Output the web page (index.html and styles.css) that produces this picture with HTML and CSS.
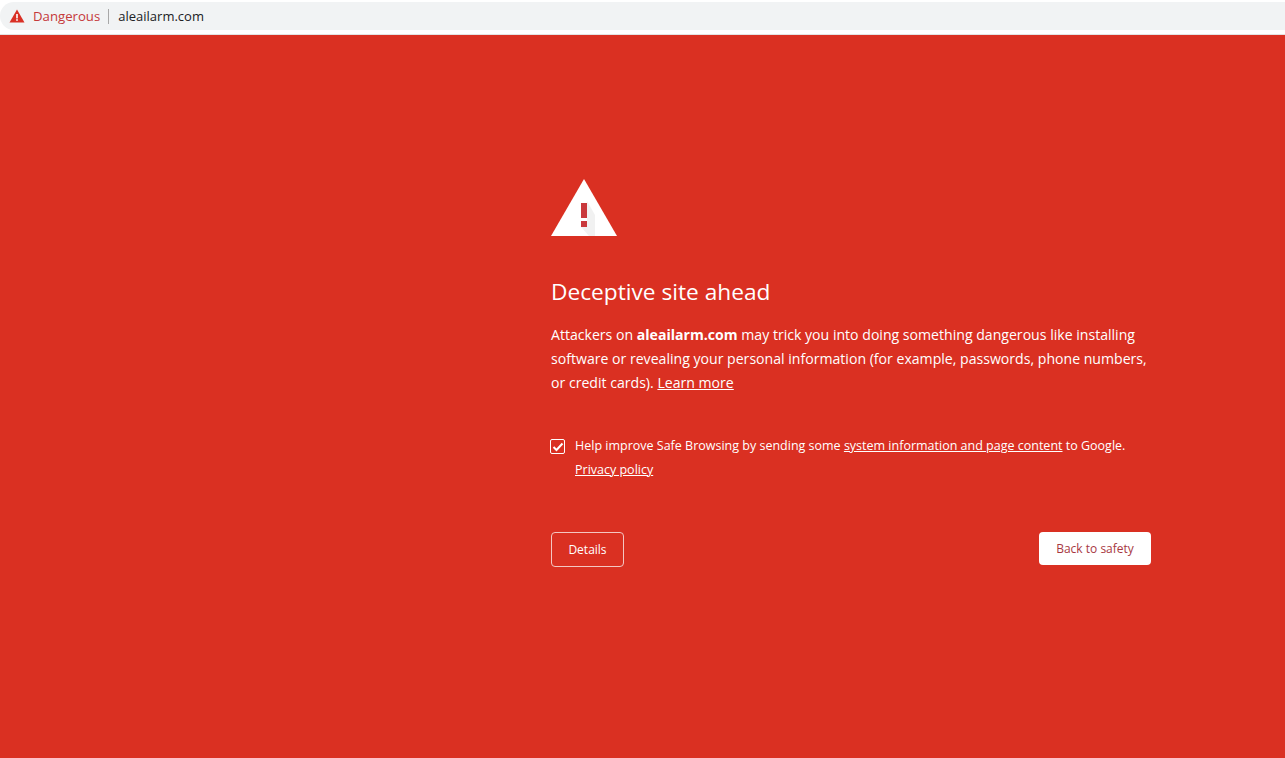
FILE: index.html
```html
<!doctype html>
<html>
<head>
  <meta charset="utf-8">
  <title>Security error</title>
  <link rel="stylesheet" href="styles.css">
</head>
<body>
  <div class="toolbar">
    <div class="omnibox">
      <svg class="omnibox-icon" width="16" height="14" viewBox="0 0 16 14">
        <path fill="#d93025" d="M8 0.5 L15.5 13.5 H0.5 Z"/>
        <rect x="7.2" y="5" width="1.6" height="4.4" fill="#fff"/>
        <rect x="7.2" y="10.2" width="1.6" height="1.6" fill="#fff"/>
      </svg>
      <span class="danger-label">Dangerous</span>
      <span class="omnibox-divider"></span>
      <span class="url">aleailarm.com</span>
    </div>
  </div>

  <div id="wrapper">
    <div class="container">
      <svg class="warning-icon" width="66" height="58" viewBox="0 0 66 58">
        <path fill="#fff" d="M33 0 L66 57 H0 Z"/>
        <path fill="#e8e8e8" d="M36 22 L44 36 L44 57 H38 L30 48 H36 Z" opacity="0.6"/>
        <rect x="30" y="24" width="6" height="15" fill="#c9383c"/>
        <rect x="30" y="42" width="6" height="6" fill="#c9383c"/>
      </svg>
      <h1>Deceptive site ahead</h1>
      <p class="message">Attackers on <strong>aleailarm.com</strong> may trick you into doing something dangerous like installing software or revealing your personal information (for example, passwords, phone numbers, or credit cards). <a href="#">Learn more</a></p>
      <div class="opt-in">
        <span class="checkbox">
          <svg width="12" height="10" viewBox="0 0 12 10">
            <path fill="none" stroke="#fff" stroke-width="2" d="M1.5 5 L4.5 8 L10.5 1.5"/>
          </svg>
        </span>
        <p>Help improve Safe Browsing by sending some <a href="#">system information and page content</a> to Google. <a href="#">Privacy policy</a></p>
      </div>
      <div class="buttons">
        <button class="btn-details">Details</button>
        <button class="btn-back">Back to safety</button>
      </div>
    </div>
  </div>
</body>
</html>
```

FILE: styles.css
```css
* {
  margin: 0;
  padding: 0;
  box-sizing: border-box;
}
html, body {
  height: 100%;
  overflow: hidden;
}
body {
  display: flex;
  flex-direction: column;
  font-family: "Open Sans", "Noto Sans", Arial, sans-serif;
  background-color: #da3022;
  color: #fff;
}
.toolbar {
  height: 35px;
  padding-top: 2px;
  background: #fff;
  border-bottom: 1px solid #e3e3e3;
}
.omnibox {
  display: flex;
  align-items: center;
  height: 28px;
  padding-left: 9px;
  background: #f1f3f4;
  border-radius: 14px 0 0 14px;
  font-size: 13px;
}
.danger-label {
  margin-left: 8px;
  font-size: 13.2px;
  color: #c5393a;
}
.omnibox-divider {
  width: 1px;
  height: 15px;
  margin: 0 9px 0 8px;
  background: #a8a8a8;
}
.url {
  color: #202124;
}
#wrapper {
  flex: 1;
  padding: 144px 0 0 551px;
}
.container {
  width: 600px;
}
.warning-icon {
  display: block;
}
h1 {
  margin-top: 39px;
  font-size: 22.7px;
  line-height: 32px;
  font-weight: 400;
}
.message {
  margin-top: 15px;
  font-size: 14.1px;
  line-height: 24px;
}
.message strong {
  font-weight: 700;
}
a {
  color: #fff;
}
.opt-in {
  display: flex;
  margin-top: 39px;
  font-size: 12.5px;
  line-height: 24px;
}
.checkbox {
  display: flex;
  flex: none;
  align-items: center;
  justify-content: center;
  width: 15px;
  height: 15px;
  margin: 5px 9px 0 -1px;
  border: 1px solid #fff;
  border-radius: 2px;
}
.opt-in p {
  margin-left: 1px;
}
.buttons {
  display: flex;
  justify-content: space-between;
  align-items: flex-start;
  margin-top: 50px;
}
button {
  font-family: inherit;
  font-size: 12px;
  border-radius: 4px;
}
.btn-details {
  width: 73px;
  height: 35px;
  background: transparent;
  border: 1px solid #f4c6c2;
  color: #fff;
}
.btn-back {
  width: 112px;
  height: 33px;
  background: #fff;
  border: none;
  color: #a8383f;
}
```
